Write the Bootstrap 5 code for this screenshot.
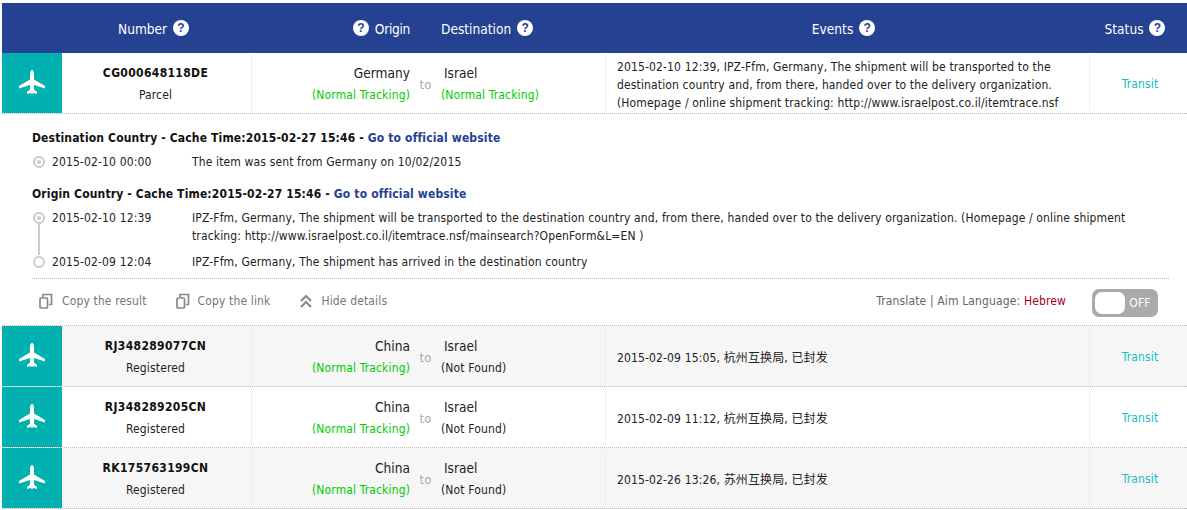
<!DOCTYPE html>
<html lang="en"><head><meta charset="utf-8"><title>Tracking</title>
<link href="https://cdn.jsdelivr.net/npm/bootstrap@5.3.0/dist/css/bootstrap.min.css" rel="stylesheet">
<style>
html,body{background:#fff;margin:0}
body{font-family:"DejaVu Sans Condensed","Liberation Sans","Noto Sans CJK SC",sans-serif;font-size:12px;line-height:18px;color:#222;letter-spacing:.14px}
.sheet{padding:3px 0 0 2px;width:1187px;overflow:hidden}
.hd{background:#254192;color:#fff;height:50px;font-size:13.6px;letter-spacing:0;padding-top:2px}
.q{display:inline-block;width:16px;height:16px;border-radius:50%;background:#fff;color:#254192;font-weight:700;font-size:12px;line-height:16px;text-align:center;font-family:"Liberation Sans",sans-serif;vertical-align:2px}
.q.after{margin-left:2px}
.q.before{margin-right:2px}
.c-i{width:60px;flex:none}
.c-n{width:190px;flex:none}
.c-o{width:158px;flex:none}
.c-t{width:31px;flex:none}
.c-d{width:164px;flex:none}
.c-e{width:485px;flex:none}
.c-s{width:97px;flex:none}
.hd .c-n{padding-right:7px}
.hd .c-e{padding-right:8px}
.hd .c-s{padding-right:7px}
.hd .narrow{letter-spacing:-.3px}
.trow{height:61px;border-bottom:1px dotted #bbb}
.trow.alt{background:#f6f6f6}
.ico{background:#00b1b0;height:60px}
.cell{height:56px;margin-top:2px;align-self:flex-start}
.c-n.cell{border-right:1px solid #eee}
.c-e.cell{border-left:1px solid #eee;border-right:1px solid #eee;padding:4px 0 0 11px}
.c-s.cell{color:#15bcc4;padding-left:3px;padding-top:2px}
.c-n.cell,.c-o.cell,.c-d.cell{padding-top:9px}
.c-n.cell{padding-right:2px}
.num{font-weight:700;color:#111;letter-spacing:.35px}
.place{font-size:13.6px;color:#222;letter-spacing:0}
.c-d .place{padding-left:3px}
.green{color:#0c0}
.muted-to{color:#aaa;font-size:13px;padding-top:4px}
.details{padding:14px 18px 0 30px;height:212px;border-bottom:1px dotted #bbb}
.sec{font-weight:700;color:#111;height:20px;line-height:20px;letter-spacing:.15px}
.sec a{color:#254192;text-decoration:none}
.sec.next{margin-top:13px}
.ev{position:relative;margin-top:5px}
.ev.tail{margin-top:8px}
.ev-time{width:160px;flex:none;padding-left:20px}
.dot{position:absolute;left:1px;top:3px;width:12px;height:12px;border-radius:50%;border:2px solid #ccc;background:#fff}
.dot.on::after{content:"";position:absolute;left:2px;top:2px;width:4px;height:4px;border-radius:50%;background:#ccc}
.dot.on::before{content:"";position:absolute;left:-2px;top:-3px;width:12px;height:15px;background:#f5f5f5;z-index:-1}
.wire{position:absolute;left:6px;top:14px;width:2px;height:32px;background:#ccc}
.tools{border-top:1px dotted #bbb;height:47px;margin-top:7px;color:#777;padding-bottom:2px}
.tools svg{flex:none}
.first-tool{margin-left:7px;margin-right:9px}
.gap-tool{margin-left:29px}
.lang{color:#666}
.lang b{font-weight:400;color:#a00020}
.sw{width:66px;height:28px;border-radius:7px;background:#aaa;color:#fff;padding:3px;margin:4px 11px 0 26px}
.sw i{display:block;width:30px;height:22px;background:#fff;border-radius:7px}
.sw span{flex:1;text-align:center}
</style></head><body>
<div class="sheet">
<div class="hd d-flex align-items-center text-center">
 <div class="c-i"></div>
 <div class="c-n">Number <span class="q after">?</span></div>
 <div class="c-o text-end"><span class="q before">?</span> <span class="narrow">Origin</span></div>
 <div class="c-t"></div>
 <div class="c-d text-start">Destination <span class="q after">?</span></div>
 <div class="c-e">Events <span class="q after">?</span></div>
 <div class="c-s">Status <span class="q after">?</span></div>
</div>

<div class="trow d-flex">
 <div class="c-i ico d-flex align-items-center justify-content-center"><svg width="26" height="26" viewBox="0 0 26 26"><path fill="#fff" d="M13 0c1.200 0 2 2 2 4v5.500l11 6.500v2.500l-11-3.500v4.500l3 2.500v2l-3.500-1-1.500 1-1.500-1-3.500 1v-2l3-2.500v-4.500l-11 3.500v-2.500l11-6.500V4c0-2 .8-4 2-4z"/></svg></div>
 <div class="c-n cell text-center"><div class="num">CG000648118DE</div><div class="mt-1">Parcel</div></div>
 <div class="c-o cell text-end"><div class="place">Germany</div><div class="green mt-1">(Normal Tracking)</div></div>
 <div class="c-t cell text-center muted-to d-flex align-items-center justify-content-center">to</div>
 <div class="c-d cell"><div class="place">Israel</div><div class="green mt-1">(Normal Tracking)</div></div>
 <div class="c-e cell d-flex align-items-center">2015-02-10 12:39, IPZ-Ffm, Germany, The shipment will be transported to the destination country and, from there, handed over to the delivery organization. (Homepage / online shipment tracking: http://www.israelpost.co.il/itemtrace.nsf</div>
 <div class="c-s cell d-flex align-items-center justify-content-center">Transit</div>
</div>

<div class="details">
 <div class="sec">Destination Country - Cache Time:2015-02-27 15:46 - <a href="#">Go to official website</a></div>
 <div class="ev d-flex"><span class="dot on"></span><div class="ev-time">2015-02-10 00:00</div><div>The item was sent from Germany on 10/02/2015</div></div>
 <div class="sec next">Origin Country - Cache Time:2015-02-27 15:46 - <a href="#">Go to official website</a></div>
 <div class="ev d-flex"><span class="dot on"></span><span class="wire"></span><div class="ev-time">2015-02-10 12:39</div><div>IPZ-Ffm, Germany, The shipment will be transported to the destination country and, from there, handed over to the delivery organization. (Homepage / online shipment tracking: http://www.israelpost.co.il/itemtrace.nsf/mainsearch?OpenForm&amp;L=EN )</div></div>
 <div class="ev tail d-flex"><span class="dot"></span><div class="ev-time">2015-02-09 12:04</div><div>IPZ-Ffm, Germany, The shipment has arrived in the destination country</div></div>
 <div class="tools d-flex align-items-center">
  <svg class="first-tool" width="14" height="16" viewBox="0 0 14 16" fill="none" stroke="#888" stroke-width="1.700"><rect x="1" y="5" width="7.500" height="10" rx="1"/><path d="M4 4V1.500h8.500v10h-2.500"/></svg><span>Copy the result</span>
  <svg class="me-2 gap-tool" width="14" height="16" viewBox="0 0 14 16" fill="none" stroke="#888" stroke-width="1.700"><rect x="1" y="5" width="7.500" height="10" rx="1"/><path d="M4 4V1.500h8.500v10h-2.500"/></svg><span>Copy the link</span>
  <svg class="me-2 gap-tool" width="14" height="14" viewBox="0 0 14 14" fill="none" stroke="#888" stroke-width="2"><path d="M2 7l5-5 5 5M2 13l5-5 5 5"/></svg><span>Hide details</span>
  <div class="lang ms-auto">Translate | Aim Language: <b>Hebrew</b></div>
  <div class="sw d-flex align-items-center"><i></i><span>OFF</span></div>
 </div>
</div>

<div class="trow alt d-flex">
 <div class="c-i ico d-flex align-items-center justify-content-center"><svg width="26" height="26" viewBox="0 0 26 26"><path fill="#fff" d="M13 0c1.200 0 2 2 2 4v5.500l11 6.500v2.500l-11-3.500v4.500l3 2.500v2l-3.500-1-1.500 1-1.500-1-3.500 1v-2l3-2.500v-4.500l-11 3.500v-2.500l11-6.500V4c0-2 .8-4 2-4z"/></svg></div>
 <div class="c-n cell text-center"><div class="num">RJ348289077CN</div><div class="mt-1">Registered</div></div>
 <div class="c-o cell text-end"><div class="place">China</div><div class="green mt-1">(Normal Tracking)</div></div>
 <div class="c-t cell text-center muted-to d-flex align-items-center justify-content-center">to</div>
 <div class="c-d cell"><div class="place">Israel</div><div class="mt-1">(Not Found)</div></div>
 <div class="c-e cell d-flex align-items-center">2015-02-09 15:05, 杭州互换局, 已封发</div>
 <div class="c-s cell d-flex align-items-center justify-content-center">Transit</div>
</div>
<div class="trow d-flex">
 <div class="c-i ico d-flex align-items-center justify-content-center"><svg width="26" height="26" viewBox="0 0 26 26"><path fill="#fff" d="M13 0c1.200 0 2 2 2 4v5.500l11 6.500v2.500l-11-3.500v4.500l3 2.500v2l-3.500-1-1.500 1-1.500-1-3.500 1v-2l3-2.500v-4.500l-11 3.500v-2.500l11-6.500V4c0-2 .8-4 2-4z"/></svg></div>
 <div class="c-n cell text-center"><div class="num">RJ348289205CN</div><div class="mt-1">Registered</div></div>
 <div class="c-o cell text-end"><div class="place">China</div><div class="green mt-1">(Normal Tracking)</div></div>
 <div class="c-t cell text-center muted-to d-flex align-items-center justify-content-center">to</div>
 <div class="c-d cell"><div class="place">Israel</div><div class="mt-1">(Not Found)</div></div>
 <div class="c-e cell d-flex align-items-center">2015-02-09 11:12, 杭州互换局, 已封发</div>
 <div class="c-s cell d-flex align-items-center justify-content-center">Transit</div>
</div>
<div class="trow alt d-flex">
 <div class="c-i ico d-flex align-items-center justify-content-center"><svg width="26" height="26" viewBox="0 0 26 26"><path fill="#fff" d="M13 0c1.200 0 2 2 2 4v5.500l11 6.500v2.500l-11-3.500v4.500l3 2.500v2l-3.500-1-1.500 1-1.500-1-3.500 1v-2l3-2.500v-4.500l-11 3.500v-2.500l11-6.500V4c0-2 .8-4 2-4z"/></svg></div>
 <div class="c-n cell text-center"><div class="num">RK175763199CN</div><div class="mt-1">Registered</div></div>
 <div class="c-o cell text-end"><div class="place">China</div><div class="green mt-1">(Normal Tracking)</div></div>
 <div class="c-t cell text-center muted-to d-flex align-items-center justify-content-center">to</div>
 <div class="c-d cell"><div class="place">Israel</div><div class="mt-1">(Not Found)</div></div>
 <div class="c-e cell d-flex align-items-center">2015-02-26 13:26, 苏州互换局, 已封发</div>
 <div class="c-s cell d-flex align-items-center justify-content-center">Transit</div>
</div>
</div>
<script src="https://cdn.jsdelivr.net/npm/bootstrap@5.3.0/dist/js/bootstrap.bundle.min.js"></script>
</body></html>
